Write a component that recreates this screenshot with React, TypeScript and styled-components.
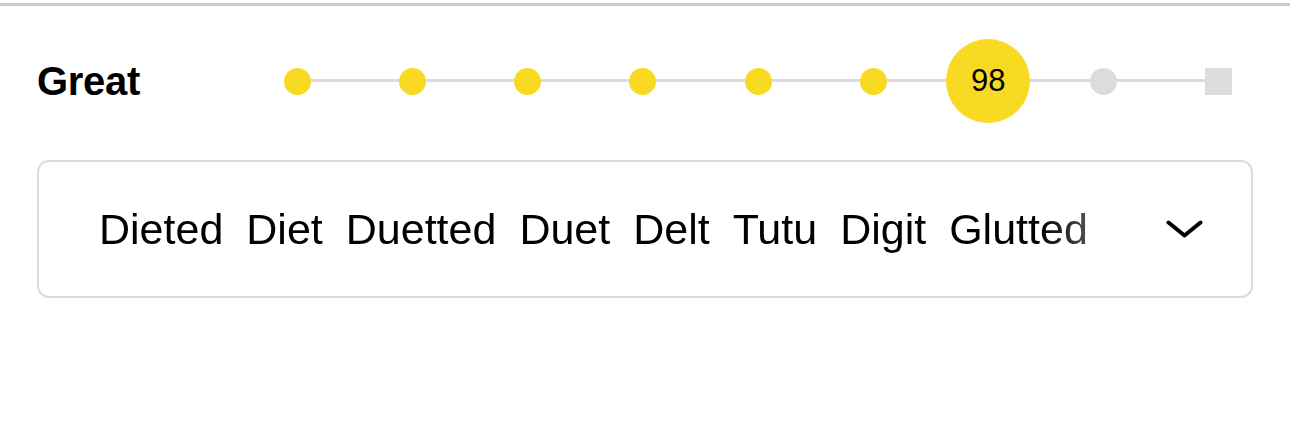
import React from "react";
import styled, { createGlobalStyle } from "styled-components";

const Global = createGlobalStyle`
  html, body { margin: 0; padding: 0; background: #fff; }
  body { font-family: "Liberation Sans", Arial, sans-serif; color: #000; }
`;

const Page = styled.div`
  margin-top: 3px;
  border-top: 3px solid #cacaca;
  width: 1290px;
`;

const StatusRow = styled.div`
  display: flex;
  align-items: center;
  height: 84px;
  margin-top: 33px;
  padding: 0 58px 0 37px;
`;

const Rank = styled.h4`
  margin: 0;
  font-size: 40px;
  font-weight: 700;
  letter-spacing: -0.3px;
`;

const Track = styled.div`
  position: relative;
  margin-left: auto;
  width: 948px;
  height: 84px;
  display: flex;
  align-items: center;
  justify-content: space-between;
  &::before {
    content: "";
    position: absolute;
    left: 13px;
    right: 13px;
    top: 40px;
    height: 3px;
    background: #dcdcdc;
  }
`;

const Slot = styled.div`
  position: relative;
  width: 27px;
  display: flex;
  justify-content: center;
  align-items: center;
`;

const Dot = styled.div<{ $done?: boolean; $square?: boolean }>`
  width: 27px;
  height: 27px;
  flex-shrink: 0;
  border-radius: ${(p) => (p.$square ? "0" : "50%")};
  background: ${(p) => (p.$done ? "#f7da21" : "#dcdcdc")};
`;

const Score = styled.div`
  width: 84px;
  height: 84px;
  flex-shrink: 0;
  border-radius: 50%;
  background: #f7da21;
  display: flex;
  align-items: center;
  justify-content: center;
  font-size: 31px;
  font-weight: 400;
  color: #000;
`;

const WordBox = styled.div`
  margin: 37px 37px 0;
  height: 134px;
  border: 2px solid #dcdcdc;
  border-radius: 12px;
  display: flex;
  align-items: center;
  padding: 0 48px 0 60px;
`;

const WordList = styled.ul`
  flex: 1;
  min-width: 0;
  margin: 0;
  padding: 0;
  list-style: none;
  display: flex;
  gap: 23px;
  overflow: hidden;
  white-space: nowrap;
  -webkit-mask-image: linear-gradient(to right, #000 calc(100% - 70px), rgba(0, 0, 0, 0.55) 100%);
  mask-image: linear-gradient(to right, #000 calc(100% - 70px), rgba(0, 0, 0, 0.55) 100%);
`;

const Word = styled.li`
  font-size: 43px;
  line-height: 48px;
  flex-shrink: 0;
`;

const Chevron = styled.svg`
  flex-shrink: 0;
  margin-left: 56px;
`;

const words = ["Dieted", "Diet", "Duetted", "Duet", "Delt", "Tutu", "Digit", "Glutted"];

export default function App() {
  const slots = [0, 1, 2, 3, 4, 5, 6, 7, 8];
  return (
    <Page>
      <Global />
      <StatusRow>
        <Rank>Great</Rank>
        <Track>
          {slots.map((i) => (
            <Slot key={i}>
              {i < 6 && <Dot $done />}
              {i === 6 && <Score>98</Score>}
              {i === 7 && <Dot />}
              {i === 8 && <Dot $square />}
            </Slot>
          ))}
        </Track>
      </StatusRow>
      <WordBox>
        <WordList>
          {words.map((w) => (
            <Word key={w}>{w}</Word>
          ))}
        </WordList>
        <Chevron width="37" height="18" viewBox="0 0 37 18" fill="none">
          <polyline
            points="2.5,2.5 18.5,15.5 34.5,2.5"
            stroke="#000"
            strokeWidth="4"
            strokeLinecap="round"
            strokeLinejoin="round"
          />
        </Chevron>
      </WordBox>
    </Page>
  );
}
